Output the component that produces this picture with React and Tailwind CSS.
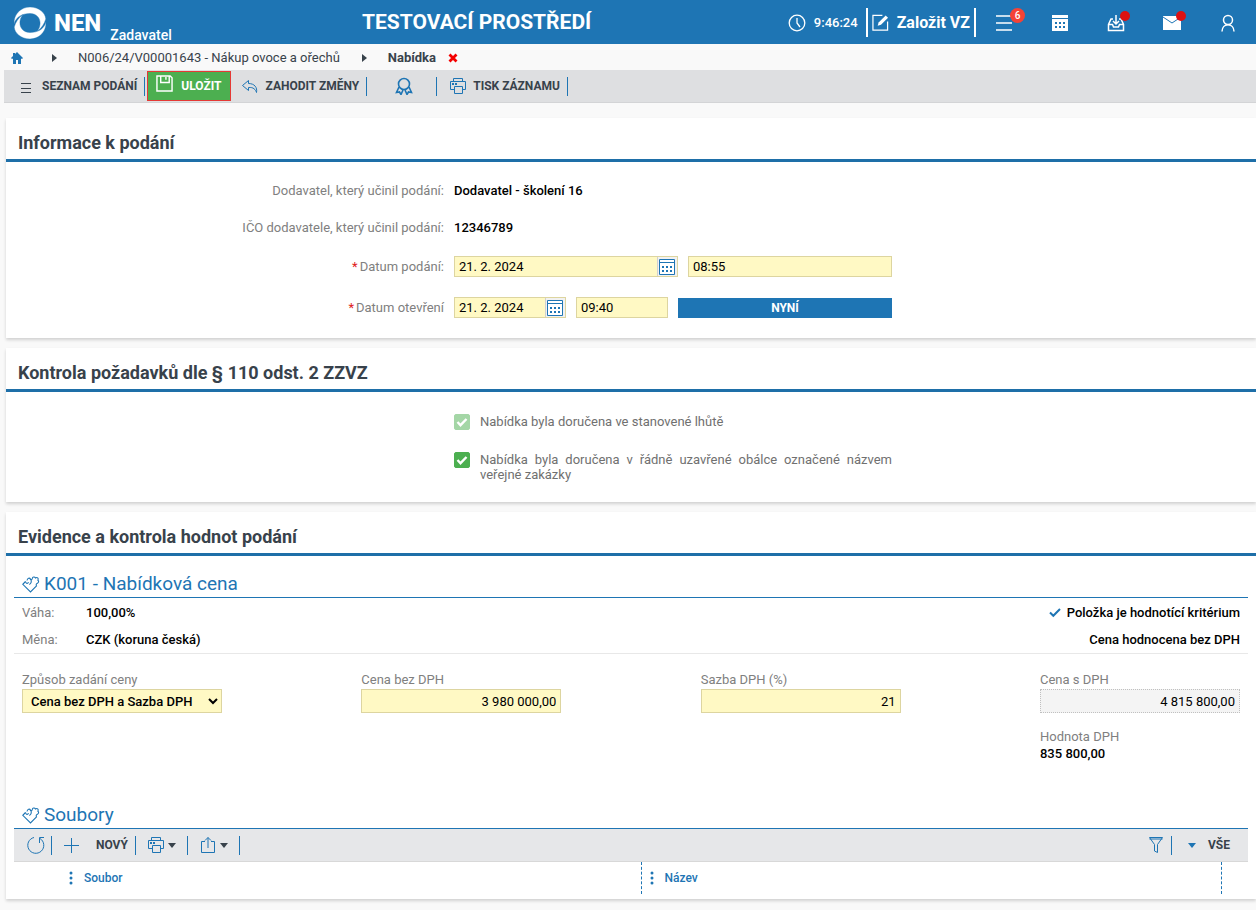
import React, { useState } from 'react';

const Svg = ({ size = 18, stroke = 1, className = '', children }) => (
    <svg
        width={size}
        height={size}
        viewBox="0 0 18 18"
        fill="none"
        stroke="currentColor"
        strokeWidth={stroke}
        className={`shrink-0 ${className}`}
        aria-hidden="true"
    >
        {children}
    </svg>
);

const PrinterIcon = () => (
    <Svg className="text-[#1e75b4]">
        <path d="M4.5 4.5v-3h9v3M5.5 12.5h-4v-8h15v8h-3M5.5 9.5h8v7h-8z" />
        <path d="M3 7h2M6 7h2" strokeWidth="2" />
    </Svg>
);

const TagIcon = () => (
    <Svg stroke={1.1} className="text-[#1e75b4]">
        <path d="M3.500 5.500.8 8.300 8.500 16l6-6c-.8-1.500 0-2.300 1-2.800 1.300-.6 1.500-2.200.4-2.900 1-2-.7-3.500-2.400-2.300-.8-1.500-3-1.300-3.200.5C10 4 8.800 4 8 3" />
        <path d="M3.500 5.500c.3 2.200 2.300 2.500 3 .6M5 4.500C5.500 2 7.500 1.500 8.500 3c1.500 2 .8 4.500-1.200 5.500" />
    </Svg>
);

const CalendarIcon = () => (
    <svg width="16" height="16" viewBox="0 0 16 16" className="shrink-0 text-[#1e75b4]" aria-hidden="true">
        <path d="M.5.5h15v15H.5zM.5 3.500h15" fill="#fff" stroke="currentColor" />
        <path d="M3 7h2v2H3zM7 7h2v2H7zM11 7h2v2h-2zM3 11h2v2H3zM7 11h2v2H7zM11 11h2v2h-2z" fill="currentColor" />
    </svg>
);

const Caret = ({ className = '' }) => (
    <svg width="8" height="5" viewBox="0 0 8 5" className={className} aria-hidden="true">
        <path d="M0 0h8L4 5z" fill="currentColor" />
    </svg>
);

const CrumbArrow = () => (
    <svg width="5" height="8" viewBox="0 0 5 8" className="text-[#38424b]" aria-hidden="true">
        <path d="M0 0l5 4-5 4z" fill="currentColor" />
    </svg>
);

const Separator = () => <span className="w-px h-[19px] bg-[#1e75b4]" />;

const Header = () => (
    <header className="flex items-center h-11 pt-px bg-[#1e75b4] text-white">
        <div className="flex items-center w-[362px] pl-[14px] h-full">
            <svg width="32" height="32" viewBox="0 0 32 32" fill="#fff" stroke="#1e75b4" strokeWidth="0.4" aria-hidden="true">
                <path d="M0 17C-.5 7 7 0 16 0c9 0 15.500 6 15.800 12-1.500 5-4 9-8.800 12.500C29 17 26 6.500 16 6.500 8 6.500 2 10 0 17z" />
                <path d="M32 15c.5 10-7 17-16 17C7 32 .5 26 .2 20c1.500-5 4-9 8.800-12.500C3 15 6 25.500 16 25.500c8 0 14-3.500 16-10.500z" />
            </svg>
            <span className="ml-2 text-2xl font-extrabold">NEN</span>
            <span className="self-end ml-[9px] text-sm font-medium leading-[18px]">Zadavatel</span>
        </div>
        <h1 className="text-[21px] font-bold whitespace-nowrap">TESTOVACÍ PROSTŘEDÍ</h1>
        <div className="flex items-center ml-auto h-full">
            <Svg stroke={1.3}><circle cx="9" cy="9" r="7.8" /><path d="M9 4v5l3 4" /></Svg>
            <span className="mx-2 text-[13px] font-medium">9:46:24</span>
            <button type="button" className="flex items-center h-[29px] px-1 border-x-2 border-white text-base font-bold">
                <Svg size={17} stroke={1.3} className="mr-2">
                    <path d="M11 1.500H1v15.500h15.500V8" />
                    <path d="M6 12.500l1-3.500 7.500-7.500 2.500 2.500-7.500 7.500z" fill="currentColor" stroke="none" />
                </Svg>
                Založit VZ
            </button>
            <button type="button" aria-label="Menu" className="relative w-14 flex justify-center">
                <Svg stroke={1.6}><path d="M1 2h16M1 9h16M1 16h16" /></Svg>
                <span className="absolute -top-[6px] left-[34px] w-[15px] h-[15px] rounded-full bg-[#f44336] text-[10px] font-medium leading-[15px]">6</span>
            </button>
            <button type="button" aria-label="Kalendář" className="w-14 flex justify-center">
                <svg width="18" height="18" viewBox="0 0 18 18" aria-hidden="true">
                    <path d="M1 1h16v3H1zM1 5h16v12H1z" fill="#fff" />
                    <path d="M4 8h2v2H4zM8 8h2v2H8zM12 8h2v2h-2zM4 12h2v2H4zM8 12h2v2H8zM12 12h2v2h-2z" fill="#1e75b4" />
                </svg>
            </button>
            <button type="button" aria-label="Doručené" className="relative w-14 flex justify-center">
                <Svg stroke={1.5}>
                    <path d="M6 5H4L1.500 10.500v6h15v-6L14 5h-2M1.500 10.500h4l1 2.500h5l1-2.500h4M9 1v9M6 7l3 3 3-3" />
                </Svg>
                <span className="absolute -top-[3px] left-8 w-[10px] h-[10px] rounded-full bg-[#dd1111]" />
            </button>
            <button type="button" aria-label="Zprávy" className="relative w-14 flex justify-center">
                <svg width="18" height="14" viewBox="0 0 18 14" aria-hidden="true">
                    <path d="M0 0h18v14H0z" fill="#fff" />
                    <path d="M0 1l9 6 9-6" fill="none" stroke="#1e75b4" />
                </svg>
                <span className="absolute -top-[5px] left-8 w-[10px] h-[10px] rounded-full bg-[#dd1111]" />
            </button>
            <button type="button" aria-label="Uživatel" className="w-14 flex justify-center">
                <Svg stroke={1.5}><circle cx="9" cy="6" r="4.500" /><path d="M3 17.500c0-9 12-9 12 0" /></Svg>
            </button>
        </div>
    </header>
);

const Breadcrumb = () => (
    <nav className="flex items-center h-[26px] pt-px pl-[11px] text-[13px] text-[#38424b]">
        <a href="#home" aria-label="Domů" className="text-[#1e75b4]">
            <svg width="12" height="12" viewBox="0 0 12 12" aria-hidden="true">
                <path d="M6 0l6 6-1 1-1-.5V12H7V8H5v4H2V6.500L1 7 0 6l2-2V1h2v1z" fill="currentColor" />
            </svg>
        </a>
        <span className="ml-[29px] mr-[21px]"><CrumbArrow /></span>
        <a href="#zakazka">N006/24/V00001643 - Nákup ovoce a ořechů</a>
        <span className="ml-[22px] mr-[21px]"><CrumbArrow /></span>
        <span className="font-bold">Nabídka</span>
        <button type="button" aria-label="Zavřít" className="ml-3 text-[#f40000]">
            <svg width="10" height="10" viewBox="0 0 10 10" aria-hidden="true">
                <path d="M1.500 1.500l7 7M8.500 1.500l-7 7" stroke="currentColor" strokeWidth="2.800" />
            </svg>
        </button>
    </nav>
);

const Toolbar = () => (
    <div className="flex items-center h-[33px] ml-1 pl-4 bg-[#dedfe1] border-b border-[#d3d4d6] text-xs font-bold text-[#38424b]">
        <button type="button" className="flex items-center mr-[7px]">
            <svg width="12" height="12" viewBox="0 0 12 12" className="mr-[10px] mt-1 text-[#38424b]" aria-hidden="true">
                <path d="M1 1.500h10M1 6.500h10M1 10.500h10" stroke="currentColor" />
            </svg>
            SEZNAM PODÁNÍ
        </button>
        <Separator />
        <button type="button" className="flex items-center h-[30px] ml-[2px] mr-[10px] px-2 bg-[#4caf50] border border-[#e53935] text-white">
            <Svg size={17} className="mr-2 mb-[6px]">
                <path d="M1 1h14l2 2v14H1zM5 1v7h9V1M10.500 2v3" strokeWidth="1.500" />
            </Svg>
            ULOŽIT
        </button>
        <button type="button" className="flex items-center mr-[7px]">
            <Svg className="mr-[7px] text-[#1e75b4]">
                <path d="M7.500 3.500l-6 5 6 5v-3c5-.5 7 2 8 5 1-5-2-9-8-9z" />
            </Svg>
            ZAHODIT ZMĚNY
        </button>
        <Separator />
        <button type="button" aria-label="Podpis" className="ml-7 mr-[23px]">
            <Svg stroke={1.6} className="text-[#1e75b4]">
                <circle cx="9" cy="7" r="5.500" />
                <path d="M4 10l-2.500 5.500 3-.5 1.500 2.500 2-4.500M14 10l2.500 5.500-3-.5-1.500 2.500-2-4.500" />
            </Svg>
        </button>
        <Separator />
        <button type="button" className="flex items-center gap-[6px] ml-3 mr-[7px]">
            <PrinterIcon />
            TISK ZÁZNAMU
        </button>
        <Separator />
    </div>
);

const Panel = ({ title, className = '', children }) => (
    <section className={`ml-[6px] bg-white shadow-[0_2px_3px_rgba(0,0,0,0.16)] ${className}`}>
        <h2 className="flex items-end h-11 px-3 pb-[2px] border-b-3 border-[#1e6fa8] text-lg font-bold text-[#38424b]">
            {title}
        </h2>
        {children}
    </section>
);

const FormRow = ({ label, htmlFor, required, children }) => (
    <div className="flex items-center gap-[10px] min-h-[21px]">
        <label htmlFor={htmlFor} className="w-[438px] shrink-0 text-right text-[#808080]">
            {required && <span className="mr-[2px] text-[#e02020]">*</span>}
            {label}
        </label>
        {children}
    </div>
);

const DateField = ({ id, value, className }) => (
    <div className={`flex h-[21px] bg-[#fff9c4] border border-[#ddd5a0] ${className}`}>
        <input id={id} defaultValue={value} className="grow w-0 min-w-0 px-1 outline-none" />
        <button type="button" aria-label="Vybrat datum" className="flex items-center justify-center shrink-0 w-5 pr-px border-l border-[#d0d0d0] bg-[#f1f1f1]">
            <CalendarIcon />
        </button>
    </div>
);

const CheckRow = ({ label, checked, disabled }) => {
    const [value, setValue] = useState(checked);

    return (
        <label className="flex items-start gap-[10px] ml-[448px] w-[438px] text-[#707070]">
            <span className="relative shrink-0 w-4 h-4">
                <input
                    type="checkbox"
                    checked={value}
                    disabled={disabled}
                    onChange={(e) => setValue(e.target.checked)}
                    className="block appearance-none w-4 h-4 rounded-xs border border-[#4caf50] checked:bg-[#4caf50] disabled:opacity-50"
                />
                {value && (
                    <svg viewBox="0 0 16 16" className="absolute inset-0 pointer-events-none" aria-hidden="true">
                        <path d="M3.500 8l3 3.200L12.500 5" fill="none" stroke="#fff" strokeWidth="2.400" />
                    </svg>
                )}
            </span>
            <span className="grow text-justify leading-[15px]">{label}</span>
        </label>
    );
};

const SectionTitle = ({ children }) => (
    <h3 className="flex items-center gap-1 h-7 pt-[2px] px-2 border-b border-[#1e75b4] text-[19px] text-[#1e75b4]">
        <TagIcon />
        {children}
    </h3>
);

const PriceField = ({ id, label, value, readOnly }) => (
    <div className="w-[200px]">
        <label htmlFor={id} className="block leading-[19px] text-[#808080]">{label}</label>
        <input
            id={id}
            defaultValue={value}
            readOnly={readOnly}
            className="block w-full h-6 px-1 text-right bg-[#fff9c4] border border-[#ddd5a0] outline-none read-only:bg-[#f4f4f4] read-only:border-dotted read-only:border-[#c0c0c0]"
        />
    </div>
);

const Price = () => (
    <div className="px-2 pt-[14px]">
        <SectionTitle>K001 - Nabídková cena</SectionTitle>
        <div className="flex justify-between h-14 px-2 pt-[5px] border-b border-[#e8e8e8]">
            <dl className="grid grid-cols-[64px_auto] content-start gap-y-[7px] leading-5">
                <dt className="text-[#808080]">Váha:</dt>
                <dd className="font-medium">100,00%</dd>
                <dt className="text-[#808080]">Měna:</dt>
                <dd className="font-medium">CZK (koruna česká)</dd>
            </dl>
            <div className="flex flex-col items-end gap-[7px] leading-5 font-medium">
                <div className="flex items-center gap-[6px]">
                    <svg width="12" height="10" viewBox="0 0 12 10" aria-hidden="true">
                        <path d="M1 4.500l3.300 3.300L11 1" fill="none" stroke="#1e75b4" strokeWidth="2" />
                    </svg>
                    Položka je hodnotící kritérium
                </div>
                <div>Cena hodnocena bez DPH</div>
            </div>
        </div>
        <div className="flex justify-between px-2 pt-4">
            <div className="w-[200px]">
                <label htmlFor="zpusob" className="block leading-[19px] text-[#808080]">Způsob zadání ceny</label>
                <select id="zpusob" className="block w-full h-6 px-1 font-medium bg-[#fff9c4] border border-[#ddd5a0] outline-none">
                    <option>Cena bez DPH a Sazba DPH</option>
                </select>
            </div>
            <PriceField id="cena-bez" label="Cena bez DPH" value="3 980 000,00" />
            <PriceField id="sazba" label="Sazba DPH (%)" value="21" />
            <div>
                <PriceField id="cena-s" label="Cena s DPH" value="4 815 800,00" readOnly />
                <div className="mt-[14px] leading-5 text-[#808080]">Hodnota DPH</div>
                <div className="leading-[14px] font-medium">835 800,00</div>
            </div>
        </div>
    </div>
);

const Files = () => (
    <div className="px-2 pt-10">
        <SectionTitle>Soubory</SectionTitle>
        <div className="flex items-center h-[33px] pl-[13px] bg-[#e6e7e9] border-b border-[#d8d8d8] text-xs font-bold text-[#38424b]">
            <button type="button" aria-label="Obnovit" className="mr-[6px] text-[#1e75b4]">
                <Svg>
                    <path d="M13 2.500A8 8 0 1 1 7 1.500M17 1.500h-4.500V7" />
                </Svg>
            </button>
            <Separator />
            <button type="button" className="flex items-center ml-3 mr-[7px]">
                <svg width="15" height="15" viewBox="0 0 15 15" className="mr-[17px] text-[#1e75b4]" aria-hidden="true">
                    <path d="M7.500 0v15M0 7.500h15" stroke="currentColor" />
                </svg>
                NOVÝ
            </button>
            <Separator />
            <button type="button" aria-label="Tisk" className="flex items-center gap-[3px] mx-[11px]">
                <PrinterIcon />
                <Caret />
            </button>
            <Separator />
            <button type="button" aria-label="Export" className="flex items-center gap-[3px] mx-[11px]">
                <Svg className="text-[#1e75b4]">
                    <path d="M6 5.500H2.500v11h13v-11H12M9 12V1.500M6 4.500l3-3 3 3" />
                </Svg>
                <Caret />
            </button>
            <Separator />
            <button type="button" aria-label="Filtr" className="ml-auto mr-[6px] text-[#1e75b4]">
                <Svg>
                    <path d="M2.500 1.500h13l-5 7v8l-3-1.500V8.500zM2.500 3h13" />
                </Svg>
            </button>
            <Separator />
            <button type="button" className="flex items-center gap-3 ml-4 mr-[18px]">
                <Caret className="text-[#1e75b4]" />
                VŠE
            </button>
        </div>
        <table className="w-full table-fixed text-xs text-left">
            <colgroup>
                <col className="w-[47px]" />
                <col />
                <col />
                <col className="w-[27px]" />
            </colgroup>
            <thead>
                <tr className="h-8 text-[#1e75b4]">
                    <td />
                    {['Soubor', 'Název'].map((name) => (
                        <th key={name} className="border-r border-dashed border-[#1e75b4] pl-2 font-medium">
                            <span className="flex items-center gap-[11px]">
                                <svg width="4" height="14" viewBox="0 0 4 14" aria-hidden="true">
                                    <g fill="currentColor">
                                        <circle cx="2" cy="2" r="1.500" />
                                        <circle cx="2" cy="7" r="1.500" />
                                        <circle cx="2" cy="12" r="1.500" />
                                    </g>
                                </svg>
                                {name}
                            </span>
                        </th>
                    ))}
                    <td />
                </tr>
            </thead>
        </table>
    </div>
);

export default function App() {
    return (
        <div className="min-h-screen bg-[#f9f9f9] pb-[11px] font-['Roboto',sans-serif] text-[13px] text-black">
            <Header />
            <Breadcrumb />
            <Toolbar />
            <main className="flex flex-col gap-[10px] pt-[15px]">
                <Panel title="Informace k podání">
                    <form className="pt-[18px] pb-5" onSubmit={(e) => e.preventDefault()}>
                        <div className="flex flex-col gap-4">
                            <FormRow label="Dodavatel, který učinil podání:">
                                <span className="font-medium">Dodavatel - školení 16</span>
                            </FormRow>
                            <FormRow label="IČO dodavatele, který učinil podání:">
                                <span className="font-medium">12346789</span>
                            </FormRow>
                        </div>
                        <div className="flex flex-col gap-5 mt-[18px]">
                            <FormRow label="Datum podání:" htmlFor="datum-podani" required>
                                <DateField id="datum-podani" value="21. 2. 2024" className="w-[224px]" />
                                <input aria-label="Čas podání" defaultValue="08:55" className="w-[204px] h-[21px] px-1 bg-[#fff9c4] border border-[#ddd5a0] outline-none" />
                            </FormRow>
                            <FormRow label="Datum otevření" htmlFor="datum-otevreni" required>
                                <DateField id="datum-otevreni" value="21. 2. 2024" className="w-[112px]" />
                                <input aria-label="Čas otevření" defaultValue="09:40" className="w-[92px] h-[21px] px-1 bg-[#fff9c4] border border-[#ddd5a0] outline-none" />
                                <button type="button" className="w-[214px] h-5 bg-[#1e75b4] text-xs font-bold text-white">NYNÍ</button>
                            </FormRow>
                        </div>
                    </form>
                </Panel>
                <Panel title="Kontrola požadavků dle § 110 odst. 2 ZZVZ">
                    <div className="flex flex-col gap-[22px] pt-[22px] pb-5">
                        <CheckRow label="Nabídka byla doručena ve stanovené lhůtě" checked disabled />
                        <CheckRow label="Nabídka byla doručena v řádně uzavřené obálce označené názvem veřejné zakázky" checked />
                    </div>
                </Panel>
                <Panel title="Evidence a kontrola hodnot podání" className="pb-[5px]">
                    <Price />
                    <Files />
                </Panel>
            </main>
        </div>
    );
}
